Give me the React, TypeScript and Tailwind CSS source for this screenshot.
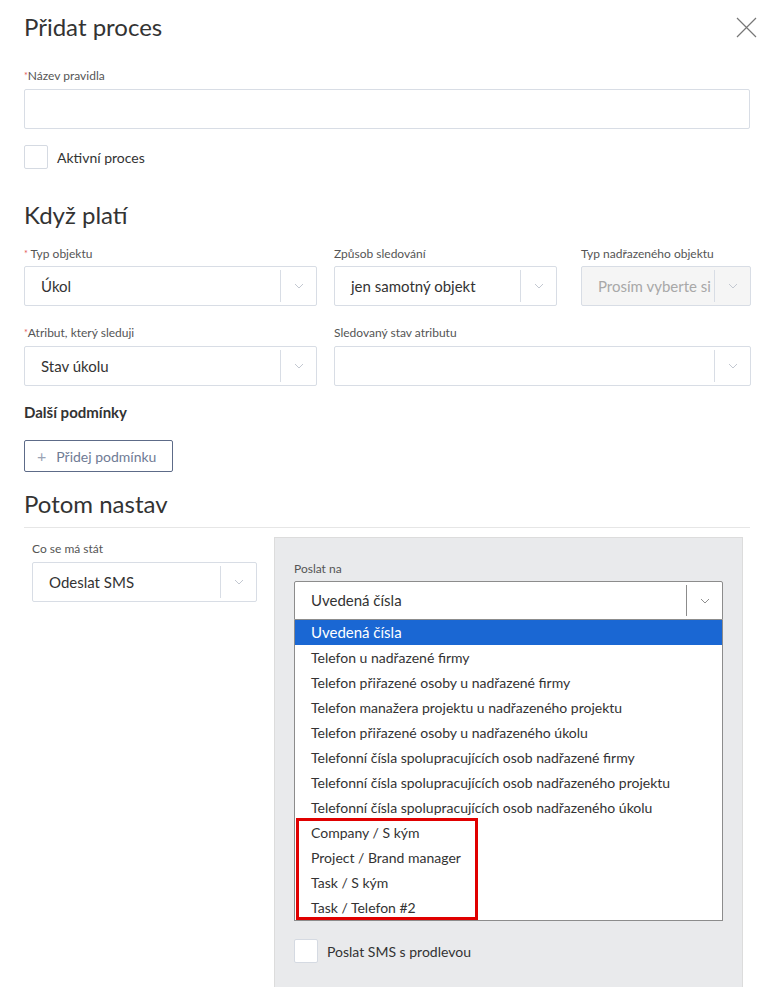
import React from "react";

function Chevron({ dark }: { dark?: boolean }) {
    return (
        <svg width="10" height="6" viewBox="0 0 10 6" fill="none">
            <path d="M1 1l4 4 4-4" stroke={dark ? "#8f8f8f" : "#c3c8d1"} strokeWidth="1" />
        </svg>
    );
}

function Label({ text, req }: { text: string; req?: boolean }) {
    return (
        <div className="text-[12px] leading-[16px] text-[#555]">
            {req && <span className="text-[#e25555] text-[9px] align-top">*</span>}
            {text}
        </div>
    );
}

function Select({ value, width, disabled }: { value?: string; width: string; disabled?: boolean }) {
    return (
        <div
            className={`${width} h-[40px] flex items-center border border-[#d8dde5] rounded-[2px] ${disabled ? "bg-[#f5f5f5]" : "bg-white"}`}
        >
            <div className={`flex-1 min-w-0 pl-4 text-[15px] whitespace-nowrap overflow-hidden ${disabled ? "text-[#a8a8a8]" : "text-[#333]"}`}>
                {value}
            </div>
            <div className="w-px h-[32px] bg-[#d8dde5]" />
            <div className="w-[35px] flex justify-center">
                <Chevron />
            </div>
        </div>
    );
}

function Checkbox({ label }: { label: string }) {
    return (
        <div className="flex items-center gap-[9px]">
            <div className="w-[24px] h-[24px] bg-white border border-[#d5dae2] rounded-[2px]" />
            <span className="text-[14px] text-[#333]">{label}</span>
        </div>
    );
}

const options = [
    "Telefon u nadřazené firmy",
    "Telefon přiřazené osoby u nadřazené firmy",
    "Telefon manažera projektu u nadřazeného projektu",
    "Telefon přiřazené osoby u nadřazeného úkolu",
    "Telefonní čísla spolupracujících osob nadřazené firmy",
    "Telefonní čísla spolupracujících osob nadřazeného projektu",
    "Telefonní čísla spolupracujících osob nadřazeného úkolu",
];

const custom = ["Company / S kým", "Project / Brand manager", "Task / S kým", "Task / Telefon #2"];

export default function App() {
    return (
        <div className="w-[774px] h-[987px] overflow-hidden bg-white font-['Lato',sans-serif] text-[#333]">
            <div className="px-6 pt-3">
                <div className="flex items-center justify-between">
                    <h1 className="text-[24px] leading-[30px] font-normal text-[#333]">Přidat proces</h1>
                    <svg width="21" height="21" viewBox="0 0 21 21" className="mr-[-7px] mt-[1px]">
                        <path d="M1 1l19 19M20 1L1 20" stroke="#777" strokeWidth="1.2" />
                    </svg>
                </div>

                <div className="mt-[26px]">
                    <Label text="Název pravidla" req />
                </div>
                <div className="mt-[5px] h-[40px] border border-[#d8dde5] rounded-[2px]" />

                <div className="mt-[16px]">
                    <Checkbox label="Aktivní proces" />
                </div>

                <h2 className="mt-[31px] text-[24px] leading-[30px] font-normal">Když platí</h2>

                <div className="mt-[16px] flex">
                    <div className="w-[293px]">
                        <Label text=" Typ objektu" req />
                        <div className="mt-[4px]">
                            <Select value="Úkol" width="w-[293px]" />
                        </div>
                    </div>
                    <div className="w-[223px] ml-[17px]">
                        <Label text="Způsob sledování" />
                        <div className="mt-[4px]">
                            <Select value="jen samotný objekt" width="w-[223px]" />
                        </div>
                    </div>
                    <div className="w-[170px] ml-[24px]">
                        <Label text="Typ nadřazeného objektu" />
                        <div className="mt-[4px]">
                            <Select value="Prosím vyberte si" width="w-[170px]" disabled />
                        </div>
                    </div>
                </div>

                <div className="mt-[19px] flex">
                    <div className="w-[293px]">
                        <Label text="Atribut, který sleduji" req />
                        <div className="mt-[5px]">
                            <Select value="Stav úkolu" width="w-[293px]" />
                        </div>
                    </div>
                    <div className="w-[417px] ml-[17px]">
                        <Label text="Sledovaný stav atributu" />
                        <div className="mt-[5px]">
                            <Select width="w-[417px]" />
                        </div>
                    </div>
                </div>

                <div className="mt-[16px] text-[15px] leading-[20px] font-bold text-[#333]">Další podmínky</div>

                <button className="mt-[18px] h-[32px] w-[149px] flex items-center border border-[#5d6b88] rounded-[2px] text-[14px] text-[#6f7b95] pl-[12px]">
                    <span className="text-[16px] mr-[10px] text-[#9aa3b5]">+</span>
                    Přidej podmínku
                </button>

                <h2 className="mt-[17px] text-[24px] leading-[30px] font-normal">Potom nastav</h2>
                <div className="mt-[8px] h-px bg-[#e6e6e6]" />

                <div className="flex">
                    <div className="w-[250px] pl-[8px] pt-[13px]">
                        <Label text="Co se má stát" />
                        <div className="mt-[5px]">
                            <Select value="Odeslat SMS" width="w-[225px]" />
                        </div>
                    </div>
                    <div className="mt-[9px] w-[469px] h-[460px] bg-[#e9eaec] border-t border-l border-r border-[#dcdcdc] px-[19px] pt-[23px]">
                        <Label text="Poslat na" />
                        <div className="mt-[4px] w-[429px]">
                            <div className="h-[39px] flex items-center bg-white border border-[#8c8c8c] rounded-t-[2px]">
                                <div className="flex-1 pl-4 text-[15px] text-[#333]">Uvedená čísla</div>
                                <div className="w-px h-[31px] bg-[#8c8c8c]" />
                                <div className="w-[35px] flex justify-center">
                                    <Chevron dark />
                                </div>
                            </div>
                            <div className="bg-white border-l border-r border-b border-[#8c8c8c] text-[14px] leading-[25px] text-[#333]">
                                <div className="h-[25px] bg-[#1a67d3] text-white pl-4 text-[15px] leading-[25px]">Uvedená čísla</div>
                                {options.map((o) => (
                                    <div key={o} className="h-[25px] pl-4 whitespace-nowrap">{o}</div>
                                ))}
                                <div className="relative">
                                    {custom.map((o) => (
                                        <div key={o} className="h-[25px] pl-4 whitespace-nowrap">{o}</div>
                                    ))}
                                    <div className="absolute left-[1px] top-[-2px] w-[182px] bottom-0 border-[3px] border-[#e00000]" />
                                </div>
                            </div>
                        </div>
                        <div className="mt-[18px]">
                            <Checkbox label="Poslat SMS s prodlevou" />
                        </div>
                    </div>
                </div>
            </div>
        </div>
    );
}
